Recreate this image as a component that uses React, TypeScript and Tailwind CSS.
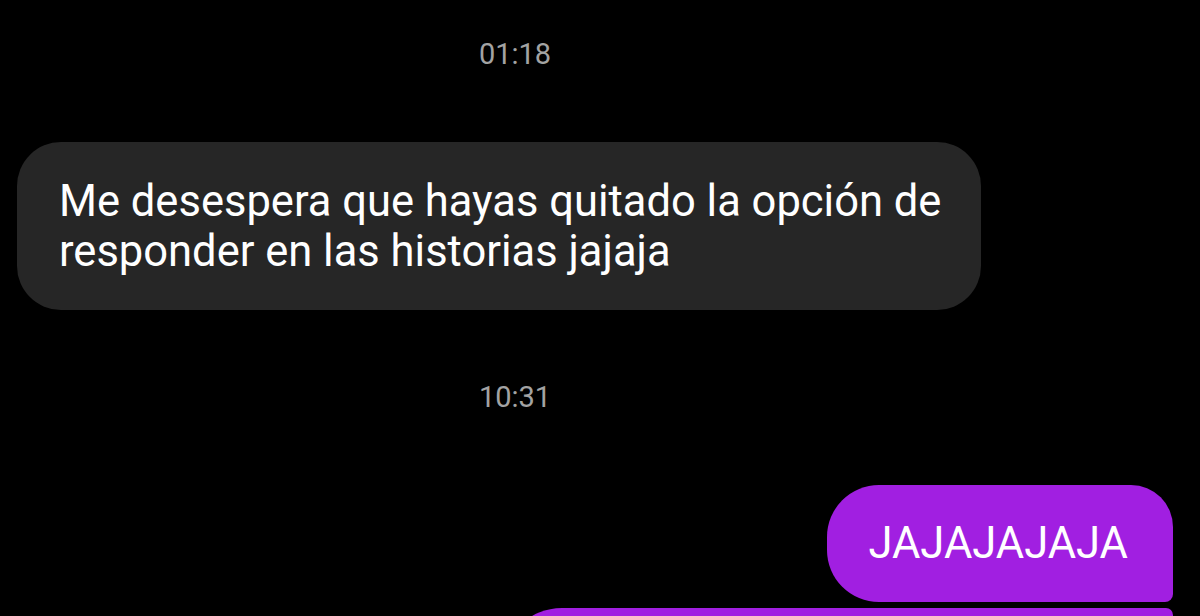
function Stamp({ time }: { time: string }) {
  return (
    <div className="w-[1030px] text-center text-[29px] leading-[34px] text-[#a3a3a3]">
      {time}
    </div>
  )
}

export default function App() {
  return (
    <div
      className="w-[1200px] h-[616px] overflow-hidden bg-black flex flex-col"
      style={{ fontFamily: "Roboto, 'Noto Sans', sans-serif" }}
    >
      <div className="mt-[37px] shrink-0">
        <Stamp time="01:18" />
      </div>

      {/* incoming message */}
      <div className="shrink-0 mt-[71px] ml-[17px] w-[964px] h-[168px] rounded-[44px] bg-[#262626] pl-[42px] pt-[35px] text-white text-[43.5px] leading-[50px]">
        Me desespera que hayas quitado la opción de
        <br />
        responder en las historias jajaja
      </div>

      <div className="mt-[70px] shrink-0">
        <Stamp time="10:31" />
      </div>

      {/* outgoing messages */}
      <div className="shrink-0 mt-[71px] flex flex-col items-end pr-[27px] gap-[6px]">
        <div className="h-[117px] rounded-tl-[52px] rounded-bl-[52px] rounded-tr-[42px] rounded-br-[8px] bg-[#a11fe1] pl-[41px] pr-[45px] pt-[34px] text-white text-[43.5px] leading-[50px]">
          JAJAJAJAJA
        </div>
        <div className="w-[671px] h-[120px] shrink-0 rounded-tl-[68px] rounded-tr-[8px] rounded-br-[8px] rounded-bl-[68px] bg-[#a11fe1]" />
      </div>
    </div>
  )
}
